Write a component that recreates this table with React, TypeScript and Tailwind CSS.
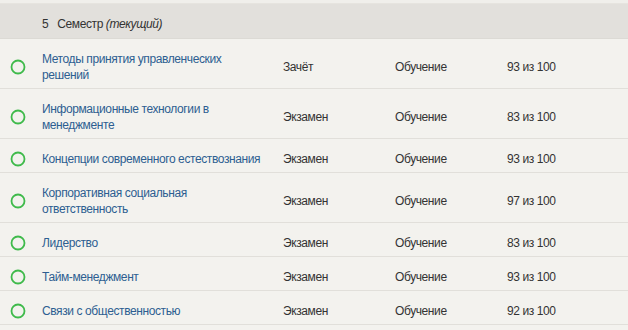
import React from "react";

type Subject = {
    name: string;
    type: string;
    status: string;
    score: string;
};

const subjects: Subject[] = [
    { name: "Методы принятия управленческих решений", type: "Зачёт", status: "Обучение", score: "93 из 100" },
    { name: "Информационные технологии в менеджменте", type: "Экзамен", status: "Обучение", score: "83 из 100" },
    { name: "Концепции современного естествознания", type: "Экзамен", status: "Обучение", score: "93 из 100" },
    { name: "Корпоративная социальная ответственность", type: "Экзамен", status: "Обучение", score: "97 из 100" },
    { name: "Лидерство", type: "Экзамен", status: "Обучение", score: "83 из 100" },
    { name: "Тайм-менеджмент", type: "Экзамен", status: "Обучение", score: "93 из 100" },
    { name: "Связи с общественностью", type: "Экзамен", status: "Обучение", score: "92 из 100" },
];

const StatusCircle = () => (
    <svg width="16" height="16" viewBox="0 0 16 16" className="block">
        <circle cx="8" cy="8" r="6.5" fill="none" stroke="#3fba4b" strokeWidth="1.8" />
    </svg>
);

const SubjectRow = ({ subject }: { subject: Subject }) => (
    <div className="grid grid-cols-[42px_241px_112px_112px_1fr] items-center border-b border-[#e1dfda] pt-[12px] pb-[5px] leading-[16px]">
        <div className="flex justify-center pl-[10px] pr-[16px]">
            <StatusCircle />
        </div>
        <div className="pr-[17px] text-[#2d5e91]">{subject.name}</div>
        <div>{subject.type}</div>
        <div>{subject.status}</div>
        <div>{subject.score}</div>
    </div>
);

export default function App() {
    return (
        <div
            className="w-[628px] h-[330px] overflow-hidden bg-[#f3f2ee] text-[12px] tracking-[-0.4px] text-[#333333]"
            style={{ fontFamily: '"Liberation Sans", Arial, sans-serif' }}
        >
            {/* Top strip */}
            <div className="h-[4px] bg-[#f0efeb] border-b border-[#e6e4df]" />

            {/* Semester header */}
            <div className="h-[35px] flex items-center pl-[42px] pt-[5px] bg-[#e2e0dc] border-b border-[#dcdad5]">
                <span className="mr-[9px]">5</span>
                <span>
                    Семестр <i>(текущий)</i>
                </span>
            </div>

            {/* Subjects */}
            {subjects.map((subject) => (
                <SubjectRow key={subject.name} subject={subject} />
            ))}
        </div>
    );
}
